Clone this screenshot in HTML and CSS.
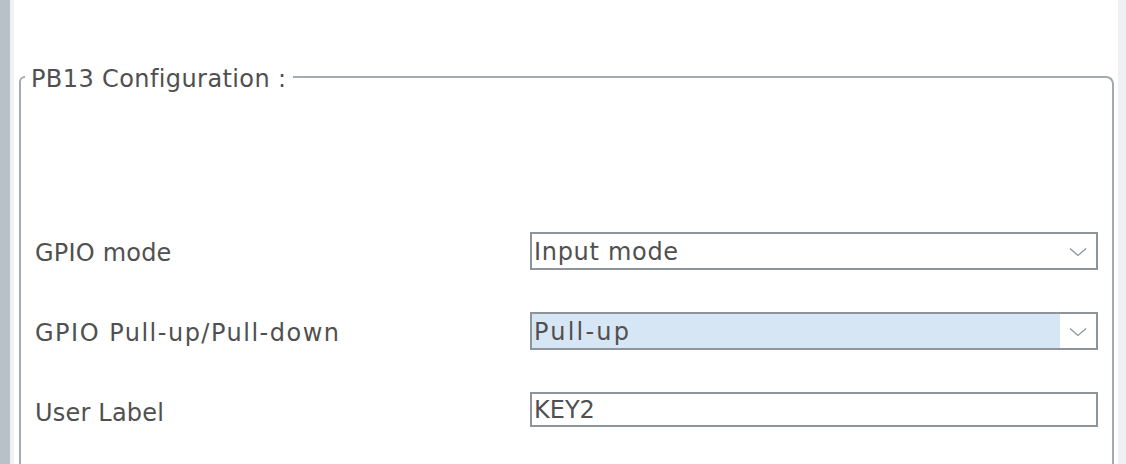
FILE: index.html
```html
<!DOCTYPE html>
<html>
<head>
<meta charset="utf-8">
<link rel="stylesheet" href="styles.css">
</head>
<body>
<div class="app">
  <div class="sidebar"></div>
  <div class="strip-left"></div>
  <main class="content">
    <fieldset class="group">
      <legend class="group-title">PB13 Configuration :</legend>
      <div class="rows">
        <div class="label">GPIO mode</div>
        <div class="combo">
          <span class="combo-value">Input mode</span>
          <span class="combo-arrow"><svg width="18" height="10" viewBox="0 0 18 10"><path d="M1 1.5 L9 8.5 L17 1.5" fill="none" stroke="#8f969b" stroke-width="1.3"/></svg></span>
        </div>
        <div class="label wide">GPIO Pull-up/Pull-down</div>
        <div class="combo">
          <span class="combo-value selected">Pull-up</span>
          <span class="combo-arrow"><svg width="18" height="10" viewBox="0 0 18 10"><path d="M1 1.5 L9 8.5 L17 1.5" fill="none" stroke="#8f969b" stroke-width="1.3"/></svg></span>
        </div>
        <div class="label">User Label</div>
        <div class="textfield">KEY2</div>
      </div>
    </fieldset>
  </main>
  <div class="strip-right"></div>
</div>
</body>
</html>
```
FILE: styles.css
```css
html, body {
  margin: 0;
  padding: 0;
  background: #ffffff;
}
body {
  font-family: "DejaVu Sans", Verdana, sans-serif;
  color: #505050;
  overflow: hidden;
}
.app {
  display: flex;
  height: 464px;
  width: 1126px;
}
.sidebar {
  width: 10px;
  background: #b8c1c7;
  flex: none;
}
.strip-left {
  width: 4px;
  background: #eff1f3;
  flex: none;
}
.strip-right {
  width: 8px;
  background: #eff0f3;
  flex: none;
}
.content {
  flex: 1;
  padding: 60px 4px 0 5px;
  min-width: 0;
}
.group {
  margin: 0;
  border: 2px solid #a3aab0;
  border-top-left-radius: 6px;
  border-top-right-radius: 8px;
  border-bottom: none;
  padding: 0 14px 0 4px;
  height: 420px;
  min-width: 0;
}
.group-title {
  font-size: 24px;
  line-height: 28px;
  padding: 5px 6px 0 6px;
  letter-spacing: 0.4px;
}
.rows {
  display: grid;
  grid-template-columns: 495px 1fr;
  grid-auto-rows: 38px;
  row-gap: 42px;
  align-items: center;
  margin: 139px 0 0 10px;
  font-size: 24px;
}
.label {
  line-height: 38px;
  padding-top: 4px;
  letter-spacing: 0.2px;
}
.label.wide {
  letter-spacing: 1.5px;
}
.combo {
  height: 38px;
  box-sizing: border-box;
  border: 2px solid #8d959a;
  display: flex;
  align-items: stretch;
}
.combo-value {
  flex: 1;
  padding: 3px 0 0 2px;
  line-height: 31px;
  letter-spacing: 0.7px;
}
.combo-value.selected {
  background: #d7e6f4;
  letter-spacing: 2.2px;
}
.combo-arrow {
  width: 36px;
  display: flex;
  align-items: center;
  justify-content: center;
  padding-top: 1px;
}
.textfield {
  height: 35px;
  box-sizing: border-box;
  border: 2px solid #8d959a;
  padding: 2px 0 0 2px;
  line-height: 29px;
  align-self: start;
}
```
